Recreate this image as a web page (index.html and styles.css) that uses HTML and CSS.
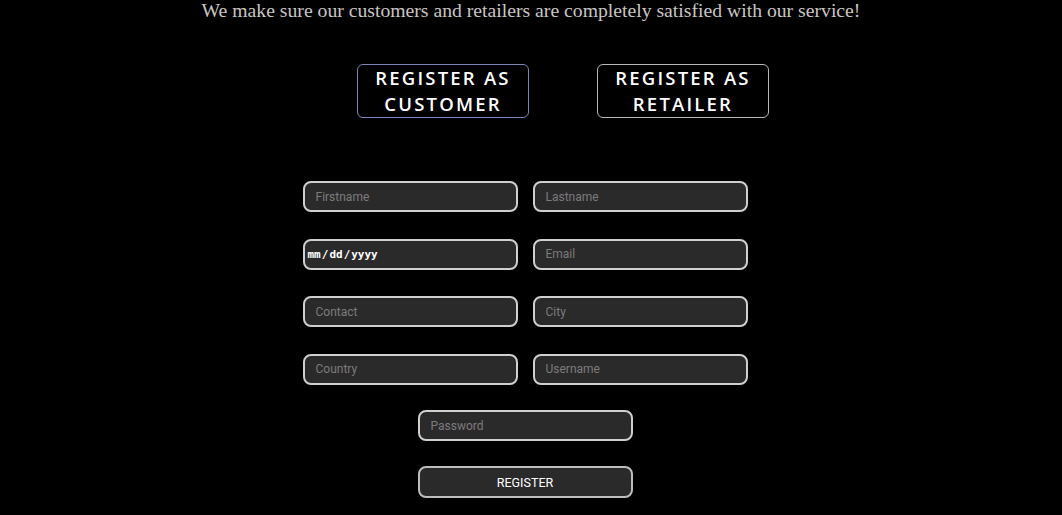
FILE: index.html
```html
<!DOCTYPE html>
<html>
<head>
<meta charset="utf-8">
<link rel="stylesheet" href="styles.css">
</head>
<body>
<h2 class="tagline">We make sure our customers and retailers are completely satisfied with our service!</h2>
<div class="choices">
  <button class="choice choice-active">REGISTER AS<br>CUSTOMER</button>
  <button class="choice">REGISTER AS<br>RETAILER</button>
</div>
<form class="form">
  <div class="grid">
    <input class="field" type="text" placeholder="Firstname">
    <input class="field" type="text" placeholder="Lastname">
    <input class="field field-date" type="date">
    <input class="field" type="text" placeholder="Email">
    <input class="field" type="text" placeholder="Contact">
    <input class="field" type="text" placeholder="City">
    <input class="field" type="text" placeholder="Country">
    <input class="field" type="text" placeholder="Username">
  </div>
  <input class="field single" type="password" placeholder="Password">
  <button class="submit" type="button">REGISTER</button>
</form>
</body>
</html>
```
FILE: styles.css
```css
html, body {
  margin: 0;
  padding: 0;
  background: #000;
}
body {
  width: 1062px;
  height: 515px;
  overflow: hidden;
}
.tagline {
  margin: 0;
  text-align: center;
  font-family: "Liberation Serif", serif;
  font-weight: normal;
  font-size: 19.7px;
  line-height: 22px;
  color: #c9c6c3;
  margin-top: -1px;
}
.choices {
  display: flex;
  justify-content: center;
  gap: 68px;
  padding-left: 64px;
  margin-top: 43px;
}
.choice {
  width: 172px;
  height: 54px;
  background: #000;
  color: #fff;
  border: 1px solid #b8b8b8;
  border-radius: 6px;
  font-family: "Open Sans", sans-serif;
  font-weight: 600;
  font-size: 18.5px;
  letter-spacing: 2.2px;
  line-height: 26px;
  padding: 0;
}
.choice-active {
  border-color: #7d86b8;
}
.form {
  display: flex;
  flex-direction: column;
  align-items: center;
  padding-right: 12px;
  margin-top: 63px;
}
.grid {
  display: grid;
  grid-template-columns: 215px 215px;
  column-gap: 15px;
  row-gap: 26.5px;
}
.field {
  box-sizing: border-box;
  width: 215px;
  height: 31px;
  background: #2b2a2b;
  border: 2px solid #cfcfcf;
  border-radius: 8px;
  color: #fff;
  font-family: Roboto, "Liberation Sans", sans-serif;
  font-size: 12px;
  padding: 0 11px;
  outline: none;
}
.field::placeholder {
  color: #7b7b7b;
}
.field-date {
  font-family: "DejaVu Sans Mono", monospace;
  font-weight: bold;
  font-size: 11px;
  padding: 0 2px;
  color: #fff;
  color-scheme: dark;
}
.field-date::-webkit-calendar-picker-indicator {
  display: none;
}
.single {
  margin-top: 25.5px;
}
.submit {
  box-sizing: border-box;
  width: 215px;
  height: 32px;
  margin-top: 25px;
  background: #2b2a2b;
  border: 2px solid #bdbdbd;
  border-radius: 8px;
  color: #fff;
  font-family: Roboto, "Liberation Sans", sans-serif;
  font-size: 12.5px;
}
```
